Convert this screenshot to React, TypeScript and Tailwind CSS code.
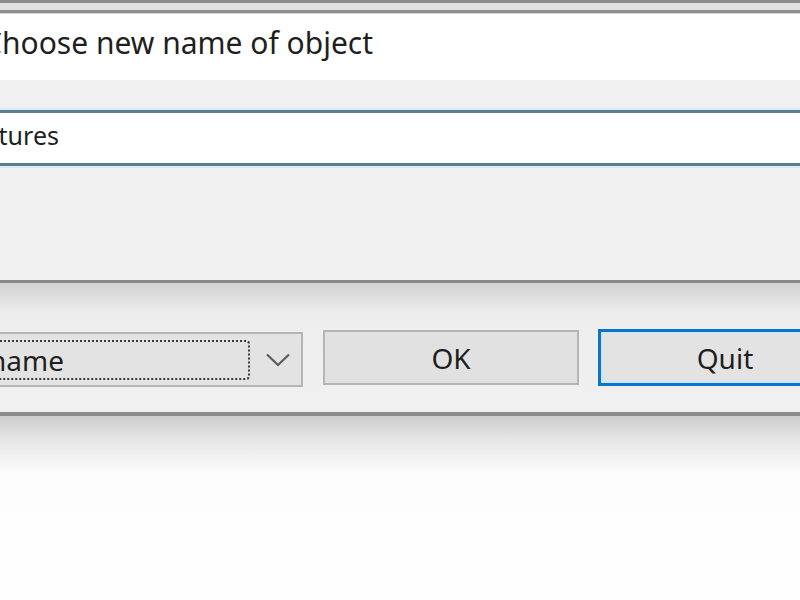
import React from 'react';

const font = { fontFamily: '"Noto Sans", "Open Sans", Arial, sans-serif' };

const Chevron = () => (
  <svg width="24" height="14" viewBox="0 0 24 14" fill="none">
    <polyline points="1,1.5 12,12 23,1.5" stroke="#5c5c5c" strokeWidth="2.2" strokeLinejoin="miter" />
  </svg>
);

export default function App() {
  return (
    <div className="w-[800px] h-[600px] overflow-hidden flex flex-col bg-white text-[#1f1f1f]" style={font}>
      {/* window edge */}
      <div className="h-[3px] bg-[#8c8c8c]" />
      <div className="h-[7px] bg-[#e2e2e2]" />
      <div className="h-[3px] bg-[#8e8e8e]" />
      <div className="h-[1px] bg-[#d6d6d6]" />

      {/* prompt */}
      <div className="h-[66px] bg-white pt-[14px]">
        <div className="ml-[-17px] text-[30px] leading-[30px] whitespace-nowrap">Choose new name of object</div>
      </div>

      <div className="h-[30px] bg-[#f0f0f0]" />

      {/* name field */}
      <div className="h-[56px] bg-white border-y-[3px] border-[#5e7b8f] shadow-[0_0_0_2px_#d6edf8] pt-[10px] relative">
        <div className="ml-[-35px] text-[25px] leading-[25px] whitespace-nowrap">Pictures</div>
      </div>

      <div className="h-[114px] bg-[#f0f0f0]" />
      <div className="h-[3px] bg-[#8a8a8a]" />

      {/* buttons */}
      <div className="h-[129px] flex items-start pt-[46px] bg-[linear-gradient(to_bottom,#d3d3d3_0px,#eeeeee_32px,#f0f0f0_100%)]">
        <div className="shrink-0 mt-[3px] ml-[-20px] w-[323px] h-[55px] flex items-center border-2 border-[#b5b5b5] bg-[#e3e3e3] pl-[2px] pr-[11px]">
          <div className="flex-1 h-[40px] flex items-center border-2 border-dotted border-[#3a3a3a] rounded-[4px] pl-[3px]">
            <span className="text-[28px] leading-[28px] whitespace-nowrap">name</span>
          </div>
          <div className="shrink-0 ml-[16px] w-[24px] flex items-center justify-center">
            <Chevron />
          </div>
        </div>

        <div className="shrink-0 mt-[1px] ml-[20px] w-[256px] h-[55px] flex items-center justify-center border-2 border-[#b5b5b5] bg-[#e1e1e1] text-[28px] leading-[28px]">
          OK
        </div>

        <div className="shrink-0 ml-[19px] w-[254px] h-[57px] flex items-center justify-center border-[3px] border-[#0a74c9] shadow-[inset_0_0_0_2px_#cfe6f7] bg-[#e3e3e3] text-[28px] leading-[28px]">
          Quit
        </div>
      </div>

      <div className="h-[4px] bg-[#8c8c8c]" />
      <div className="flex-1 bg-[linear-gradient(to_bottom,#cdcdcd_0px,#e6e6e6_24px,#fdfdfd_58px,#fefefe_100%)]" />
    </div>
  );
}
